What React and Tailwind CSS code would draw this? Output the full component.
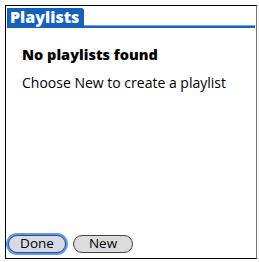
export default function App() {
  const font = { fontFamily: '"Open Sans", "Noto Sans", sans-serif' };
  return (
    <div className="w-[259px] h-[262px] bg-white relative overflow-hidden" style={font}>
      <div className="absolute left-[5px] top-[5px] w-[252px] h-[254px] border-t border-l border-b border-r border-t-black border-l-black border-b-black border-r-[#777] flex flex-col">
        <div className="flex items-end pl-[1px] pt-[2px]">
          <div className="h-[20px] bg-[#1460bf] text-white font-extrabold text-[16px] leading-[19px] pl-[3px] pr-[5px] rounded-tr-[3px]">
            Playlists
          </div>
          <div className="flex-1 h-[3px] bg-[#1a62c0] border-t border-t-[#6aa6e8] mr-[1px]"></div>
        </div>
        <div className="pl-[16px] pt-[17px] text-black">
          <div className="font-extrabold text-[14.5px] leading-[20px]">No playlists found</div>
          <div className="text-[14px] leading-[20px] mt-[8px] font-medium">Choose New to create a playlist</div>
        </div>
        <div className="flex-1"></div>
        <div className="flex gap-[7px] pl-[2px] pb-[5px]">
          <div className="w-[58px] h-[18px] rounded-full border border-[#2a4a8a] bg-[#d6dae3] ring-2 ring-[#5d9af0] flex items-center justify-center text-[13.5px] leading-none font-medium">
            Done
          </div>
          <div className="w-[60px] h-[18px] rounded-full border border-[#444] bg-[#dcdcdc] flex items-center justify-center text-[13.5px] leading-none font-medium">
            New
          </div>
        </div>
      </div>
    </div>
  );
}
